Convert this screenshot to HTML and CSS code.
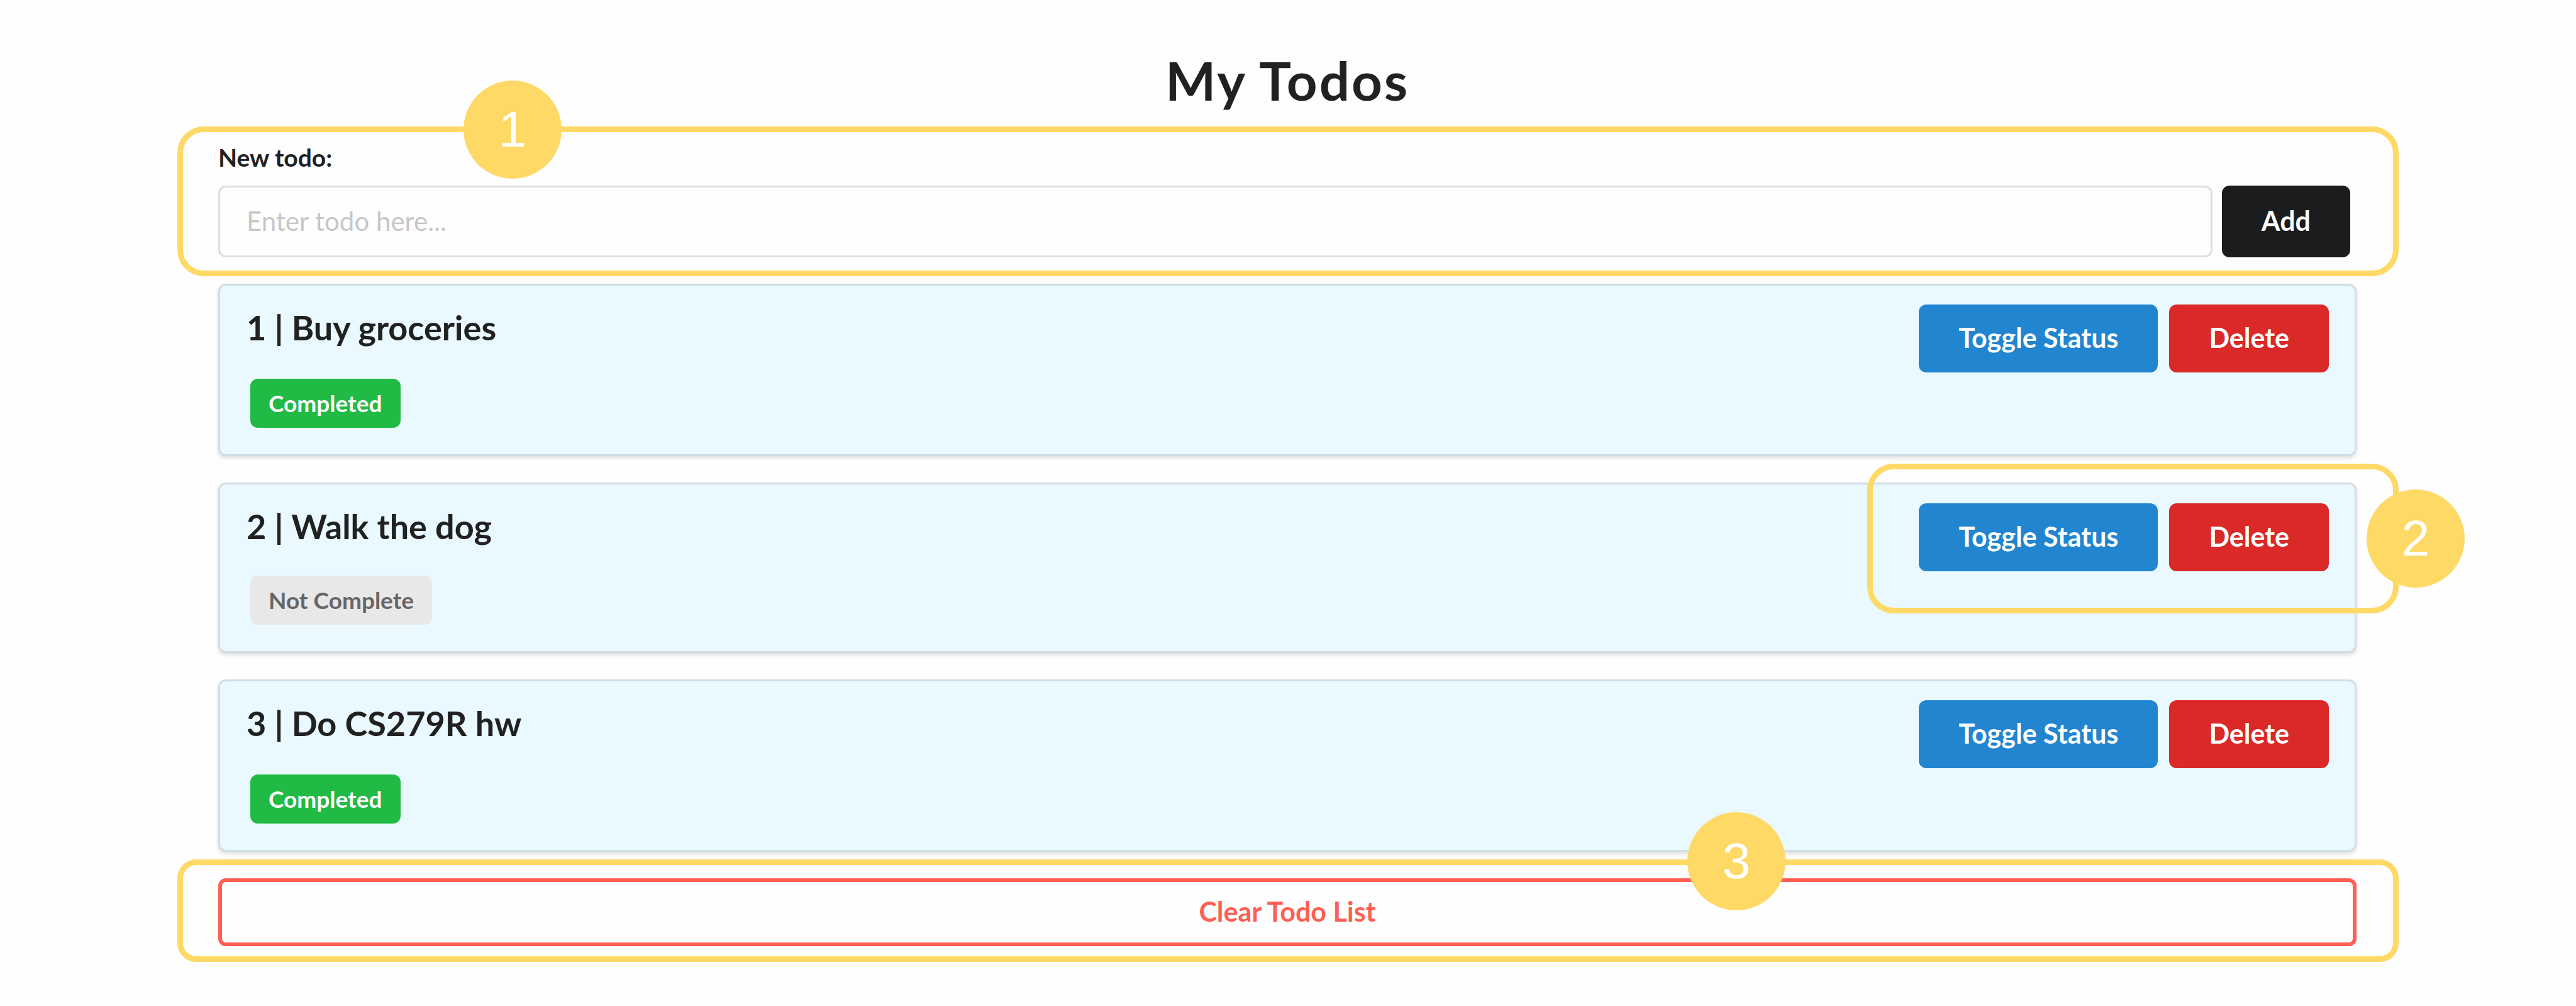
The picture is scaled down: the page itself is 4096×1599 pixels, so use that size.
FILE: index.html
```html
<!DOCTYPE html>
<html lang="en">
<head>
<meta charset="utf-8">
<title>My Todos</title>
<link rel="stylesheet" href="styles.css">
</head>
<body>
<main class="page">
  <h1 class="title">My Todos</h1>

  <form class="new-todo">
    <label class="new-todo-label" for="todo-text">New todo:</label>
    <div class="new-todo-row">
      <input class="new-todo-input" id="todo-text" type="text" placeholder="Enter todo here...">
      <button class="button button-black" type="button">Add</button>
    </div>
    <div class="callout callout-form"><span class="marker">1</span></div>
  </form>

  <ul class="todo-list">
    <li class="todo">
      <div class="todo-info">
        <h2 class="todo-name">1 | Buy groceries</h2>
        <span class="status status-done">Completed</span>
      </div>
      <div class="todo-actions">
        <button class="button button-blue" type="button">Toggle Status</button>
        <button class="button button-red" type="button">Delete</button>
      </div>
    </li>
    <li class="todo">
      <div class="todo-info">
        <h2 class="todo-name">2 | Walk the dog</h2>
        <span class="status">Not Complete</span>
      </div>
      <div class="todo-actions">
        <button class="button button-blue" type="button">Toggle Status</button>
        <button class="button button-red" type="button">Delete</button>
        <div class="callout callout-actions"><span class="marker">2</span></div>
      </div>
    </li>
    <li class="todo">
      <div class="todo-info">
        <h2 class="todo-name">3 | Do CS279R hw</h2>
        <span class="status status-done">Completed</span>
      </div>
      <div class="todo-actions">
        <button class="button button-blue" type="button">Toggle Status</button>
        <button class="button button-red" type="button">Delete</button>
      </div>
    </li>
  </ul>

  <div class="clear">
    <button class="button button-clear" type="button">Clear Todo List</button>
    <div class="callout callout-clear"><span class="marker">3</span></div>
  </div>
</main>
</body>
</html>
```
FILE: styles.css
```css
* {
  box-sizing: border-box;
}

body {
  margin: 0;
  background: #fefefe;
  color: #212121;
  font-family: Lato, sans-serif;
  font-size: 42px;
}

.page {
  padding: 73px 349px 72px 347px;
}

.title {
  margin: 0 0 45px;
  font-size: 85px;
  line-height: 108px;
  font-weight: 700;
  text-align: center;
  letter-spacing: 3px;
}

/* New todo form */
.new-todo {
  position: relative;
  display: flex;
  flex-direction: column;
  gap: 21px;
  margin-bottom: 42px;
  padding-right: 10px;
}

.new-todo-label {
  font-size: 39px;
  line-height: 48px;
  font-weight: 700;
}

.new-todo-row {
  display: flex;
  gap: 15px;
}

.new-todo-input {
  flex: 1;
  min-width: 0;
  height: 114px;
  padding: 0 42px 3px;
  border: 3px solid #dededf;
  border-radius: 12px;
  background: #fefefe;
  color: #212121;
  font: inherit;
}

.new-todo-input::placeholder {
  color: #c7c7c7;
  opacity: 1;
}

/* Buttons */
.button {
  padding: 32px 63px 34px;
  border: 0;
  border-radius: 12px;
  color: #fff;
  font-family: inherit;
  font-size: 43px;
  line-height: 42px;
  font-weight: 700;
}

.button-black {
  background: #1b1c1d;
}

.button-blue {
  background: #2185d0;
}

.button-red {
  background: #db2828;
}

.button-clear {
  width: 100%;
  border: 6px solid #ff5f54;
  padding: 26px 63px 28px;
  background: transparent;
  color: #ff5f54;
}

/* Todo cards */
.todo-list {
  display: flex;
  flex-direction: column;
  gap: 42px;
  margin: 0 0 42px;
  padding: 0;
  list-style: none;
}

.todo {
  display: flex;
  justify-content: space-between;
  align-items: flex-start;
  padding: 30px 41px 42px 42px;
  border: 3px solid #d1dee3;
  border-radius: 12px;
  background: #e9f9ff;
  box-shadow: 0 3px 6px rgba(34, 36, 38, 0.15);
}

.todo-name {
  margin: 2px 0 43px;
  font-size: 54px;
  line-height: 70px;
  font-weight: 700;
}

.status {
  display: block;
  width: max-content;
  margin-left: 6px;
  padding: 21px 29px;
  border-radius: 12px;
  background: #e8e8e8;
  color: #666;
  font-size: 37px;
  line-height: 36px;
  font-weight: 700;
}

.status-done {
  margin-top: 46px;
  background: #21ba45;
  color: #fff;
}

.todo-actions {
  position: relative;
  display: flex;
  gap: 18px;
}

.clear {
  position: relative;
}

/* Numbered callouts laid over the interface */
.callout {
  position: absolute;
  z-index: 1;
  border: 9px solid #fed966;
  border-radius: 42px;
  pointer-events: none;
}

.callout-form {
  inset: -25px -67px -30px -65px;
}

.callout-actions {
  inset: -63px -111px -67px -82px;
}

.callout-clear {
  inset: -30px -67px -25px -65px;
  border-radius: 30px;
}

.marker {
  position: absolute;
  width: 156px;
  height: 156px;
  border-radius: 50%;
  background: #fed966;
  color: #fff;
  font-family: "Liberation Sans", Arial, sans-serif;
  font-size: 80px;
  line-height: 156px;
  text-align: center;
}

.callout-form .marker {
  top: -82px;
  left: 446px;
}

.callout-actions .marker {
  top: 32px;
  right: -114px;
}

.callout-clear .marker {
  top: -84px;
  right: 966px;
}
```
